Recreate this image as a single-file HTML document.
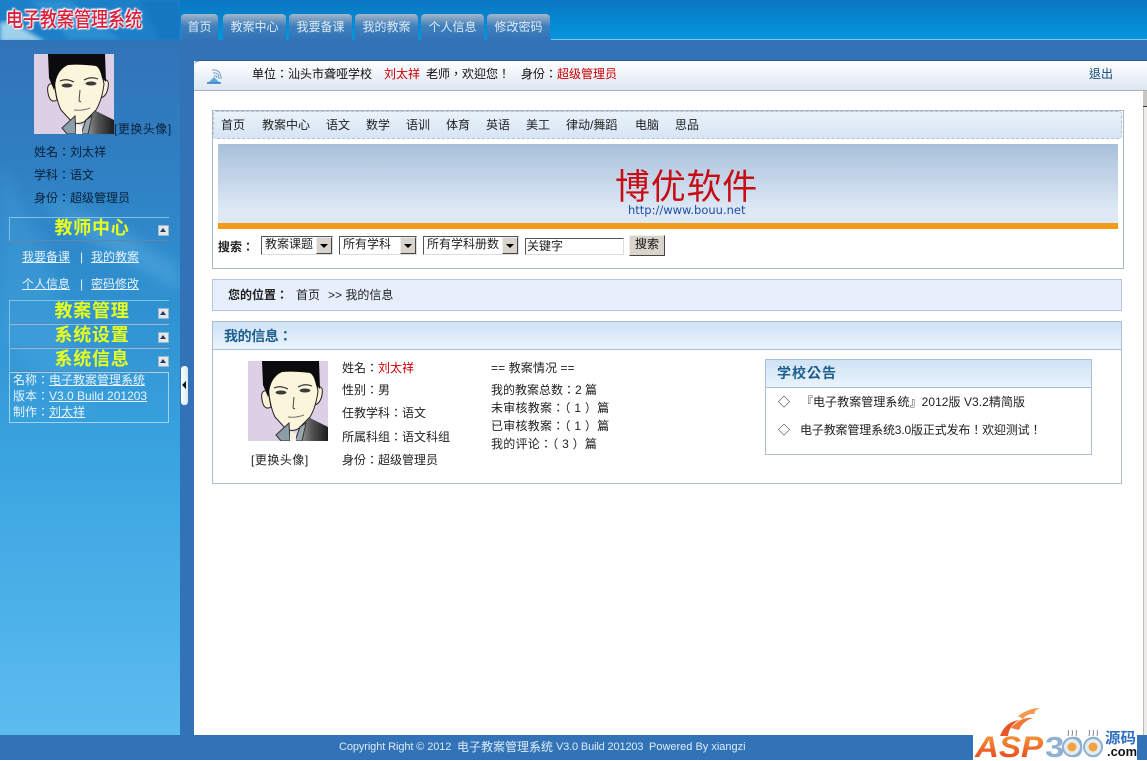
<!DOCTYPE html>
<html lang="zh-TW">
<head>
<meta charset="utf-8">
<title>电子教案管理系统</title>
<style>
html,body{margin:0;padding:0;width:1147px;height:761px;overflow:hidden;background:#fff}
body{position:relative;font:12px/14px "Liberation Sans","Noto Sans CJK TC",sans-serif;color:#222}
.a,.t{position:absolute}
.t{white-space:nowrap;line-height:14px}
.tab{position:absolute;top:14px;height:26px;border-radius:4px 4px 0 0;background:linear-gradient(#a3b8cc 0,#7a9ec4 5px,#3f80bd 12px,#3273b8 100%);color:#dfeaf4;text-align:center;line-height:26px}
.sh{position:absolute;left:9px;height:22px;border-top:1px solid #7fc4e8;border-left:1px solid #7fc4e8;border-bottom:1px solid #5f86ad;box-sizing:content-box;width:159px}
.sh b{position:absolute;left:38px;top:-2px;width:88px;text-align:center;font-size:18px;line-height:23px;color:#e6ff1e;letter-spacing:.75px;white-space:nowrap;font-family:"Noto Sans CJK TC",sans-serif}
.sh i{position:absolute;left:148px;top:7px;background:#dfe8ee;border:1px solid #9fb8c8;box-sizing:content-box;width:9px;height:9px}
.sh i:after{content:"";position:absolute;left:1px;top:2px;border:3.5px solid transparent;border-top:0;border-bottom:4px solid #335}
.lk{color:#e6f3fc;text-decoration:underline}
.sel{position:absolute;top:236px;height:19px;box-sizing:border-box;border:1px solid;border-color:#555 #ddd #ddd #555;background:#fff;font-size:12px;line-height:14px;padding-left:3px;white-space:nowrap;overflow:hidden}
.sel u{position:absolute;right:0;top:0;width:16px;height:17px;background:#d8d4cc;border:1px solid;border-color:#eee #444 #444 #eee;box-sizing:border-box;text-decoration:none}
.sel u:after{content:"";position:absolute;left:3px;top:6px;border:4px solid transparent;border-top:4px solid #000;border-bottom:0}
.grn{color:#c00}
</style>
</head>
<body>

<!-- top band -->
<div class="a" style="left:0;top:0;width:1147px;height:40px;background:linear-gradient(#0a76c2,#0497de)"></div>
<svg class="a" style="left:0;top:0" width="180" height="40">
  <defs><filter id="bl"><feGaussianBlur stdDeviation="2"/></filter></defs>
  <rect width="180" height="40" fill="#1c80c8"/>
  <polygon points="0,22 12,22 46,42 0,42" fill="#c8ecf8" opacity=".75" filter="url(#bl)"/>
  <polygon points="30,0 70,0 120,40 70,40" fill="#3fa4dc" opacity=".4" filter="url(#bl)"/>
  <polygon points="140,0 180,0 180,40 160,40" fill="#0d6fba" opacity=".5" filter="url(#bl)"/>
</svg>
<div class="t" style="left:6px;top:6px;width:138px;font-size:17px;line-height:24px;font-weight:500;color:#d8203c;font-family:'Noto Sans CJK TC',sans-serif;transform:scaleY(1.2);transform-origin:50% 50%;text-shadow:0 0 2px #fff,0 0 2px #fff,0 0 3px #fcd,1px 1px 1px #fff,-1px -1px 1px #fff">电子教案管理系统</div>

<div class="a" style="left:0;top:40px;width:1147px;height:21px;background:#3273b8"></div>
<div class="a" style="left:551px;top:39px;width:596px;height:1px;background:#7cc8f0"></div>

<div class="tab" style="left:181px;width:37px">首页</div>
<div class="tab" style="left:223px;width:63px">教案中心</div>
<div class="tab" style="left:289px;width:63px">我要备课</div>
<div class="tab" style="left:355px;width:63px">我的教案</div>
<div class="tab" style="left:421px;width:63px">个人信息</div>
<div class="tab" style="left:487px;width:63px">修改密码</div>

<!-- sidebar -->
<div class="a" style="left:0;top:40px;width:180px;height:695px;background:linear-gradient(#3273b8 0,#2f7fc2 120px,#2f90d0 260px,#3aa4e0 420px,#5cbcf0 695px)"></div>
<svg class="a" style="left:0;top:40px" width="180" height="695">
  <defs><filter id="bl2"><feGaussianBlur stdDeviation="8"/></filter></defs>
  <polygon points="30,150 120,190 180,230 180,250 90,200" fill="#7accf0" opacity=".3" filter="url(#bl2)"/>
  <polygon points="0,120 50,220 90,380 0,300" fill="#5fb8e8" opacity=".2" filter="url(#bl2)"/>
</svg>
<div class="a" style="left:180px;top:40px;width:14px;height:695px;background:#3273b8"></div>

<svg class="a" style="left:34px;top:54px" width="80" height="80" viewBox="0 0 80 80">
  <defs><linearGradient id="sd" x1="0" y1="0" x2="1" y2="0"><stop offset="0" stop-color="#aaa"/><stop offset=".45" stop-color="#555"/><stop offset="1" stop-color="#1c1c1c"/></linearGradient></defs>
  <rect width="80" height="80" fill="#dccfe6"/>
  <path d="M50 80 L58 55 L80 66 L80 80Z" fill="url(#sd)"/>
  <path d="M23 46 Q16 50 14 39 Q12 28 20 30Z" fill="#f9f2d8" stroke="#222"/>
  <path d="M68 26 Q76 24 74 34 Q72 44 65 44Z" fill="#f9f2d8" stroke="#222"/>
  <path d="M20 20 L34 9 L66 11 L70 30 Q68 46 62 56 L50 68 Q44 71 38 68 L27 56 Q21 44 20 20Z" fill="#fbf5dc" stroke="#222"/>
  <path d="M14 0 L71 0 L72 28 L68 24 Q66 14 62 12 Q46 10 34 11 Q25 15 22 26 L20 36 L15 24 Z" fill="#0b0b0d"/>
  <path d="M26 27 Q32 24 40 28" fill="none" stroke="#333" stroke-width="1.2"/>
  <path d="M50 26 Q57 22 64 25" fill="none" stroke="#333" stroke-width="1.2"/>
  <ellipse cx="33" cy="31.5" rx="5.5" ry="2" fill="#3a3a3a"/>
  <ellipse cx="57" cy="29.5" rx="5.5" ry="2" fill="#3a3a3a"/>
  <path d="M46 36 L45 47 L47 48" fill="none" stroke="#444"/>
  <path d="M40 56 Q48 57 56 54" fill="none" stroke="#777"/>
  <path d="M28 74 L41 62 L42 80 L33 80 Z" fill="#8e9ea8" stroke="#333"/>
  <path d="M54 80 L58 62 L52 66 L47 80Z" fill="#9aa8b0" stroke="#333"/>
  <path d="M42 80 L42 70 L48 72 L48 80Z" fill="#f4f2e4"/>
</svg>
<div class="t" style="left:114px;top:122px;color:#0a2038;letter-spacing:.5px">[更换头像]</div>
<div class="t" style="left:34px;top:145px;color:#0a2038">姓名：刘太祥</div>
<div class="t" style="left:34px;top:168px;color:#0a2038">学科：语文</div>
<div class="t" style="left:34px;top:191px;color:#0a2038">身份：超级管理员</div>

<div class="sh" style="top:217px"><b>教师中心</b><i></i></div>
<div class="t lk" style="left:22px;top:250px">我要备课</div>
<div class="t" style="left:80px;top:250px;color:#e6f3fc">|</div>
<div class="t lk" style="left:91px;top:250px">我的教案</div>
<div class="t lk" style="left:22px;top:277px">个人信息</div>
<div class="t" style="left:80px;top:277px;color:#e6f3fc">|</div>
<div class="t lk" style="left:91px;top:277px">密码修改</div>
<div class="sh" style="top:300px"><b>教案管理</b><i></i></div>
<div class="sh" style="top:324px"><b>系统设置</b><i></i></div>
<div class="sh" style="top:348px"><b>系统信息</b><i></i></div>
<div class="a" style="left:9px;top:372px;width:158px;height:49px;border:1px solid #9ed4f0"></div>
<div class="t" style="left:13px;top:373px;color:#eaf6fd">名称：<span class="lk">电子教案管理系统</span></div>
<div class="t" style="left:13px;top:389px;color:#eaf6fd">版本：<span class="lk">V3.0 Build 201203</span></div>
<div class="t" style="left:13px;top:405px;color:#eaf6fd">制作：<span class="lk">刘太祥</span></div>

<!-- collapse handle -->
<div class="a" style="left:181px;top:366px;width:7px;height:39px;border-radius:3px;background:linear-gradient(90deg,#fff,#dbe8f4)"></div>
<div class="a" style="left:182px;top:381px;border:4px solid transparent;border-left:0;border-right:4px solid #112"></div>

<!-- main -->
<div class="a" style="left:194px;top:61px;width:953px;height:674px;background:#fff;border-radius:6px 0 0 0"></div>
<div class="a" style="left:194px;top:60px;width:953px;height:31px;box-sizing:border-box;border-radius:6px 0 0 0;border-top:1px solid #2a5a88;border-bottom:1px solid #aab2ba;background:linear-gradient(#fff,#dde6f1)"></div>
<svg class="a" style="left:207px;top:68px" width="15" height="16" viewBox="0 0 15 16">
  <path d="M1 15 L7 9 L13 15Z" fill="#5da8e0"/>
  <path d="M0 15H14" stroke="#2f7fc2" stroke-width="1.5"/>
  <path d="M7 8 Q10 7 10 10 M6 5 Q12 4 12 11 M5 2 Q14 1 14 11" fill="none" stroke="#6f9cc4"/>
</svg>
<div class="t" style="left:252px;top:67px;color:#111">单位：汕头市聋哑学校</div>
<div class="t grn" style="left:384px;top:67px">刘太祥</div>
<div class="t" style="left:426px;top:67px;color:#111">老师，欢迎您！</div>
<div class="t" style="left:521px;top:67px;color:#111">身份：<span class="grn">超级管理员</span></div>
<div class="t" style="left:1089px;top:67px;color:#104878">退出</div>

<!-- scrollbar -->
<div class="a" style="left:1143px;top:107px;width:4px;height:628px;background:#eeece8;border-left:1px solid #bdbbb5;box-sizing:border-box"></div>
<div class="a" style="left:1143px;top:91px;width:4px;height:16px;background:#c8c6c0;border-bottom:1px solid #333;box-sizing:border-box"></div>

<!-- box 1 -->
<div class="a" style="left:212px;top:110px;width:912px;height:159px;box-sizing:border-box;border:1px solid #a9b8c8"></div>
<div class="a" style="left:213px;top:111px;width:909px;height:28px;box-sizing:border-box;border:1px dashed #b4c0cc;border-radius:3px;background:linear-gradient(#eaf2fa,#d6e5f5)"></div>
<div class="t" style="left:221px;top:118px">首页</div>
<div class="t" style="left:262px;top:118px">教案中心</div>
<div class="t" style="left:326px;top:118px">语文</div>
<div class="t" style="left:366px;top:118px">数学</div>
<div class="t" style="left:406px;top:118px">语训</div>
<div class="t" style="left:446px;top:118px">体育</div>
<div class="t" style="left:486px;top:118px">英语</div>
<div class="t" style="left:526px;top:118px">美工</div>
<div class="t" style="left:566px;top:118px">律动/舞蹈</div>
<div class="t" style="left:635px;top:118px">电脑</div>
<div class="t" style="left:675px;top:118px">思品</div>

<div class="a" style="left:218px;top:144px;width:900px;height:79px;background:linear-gradient(#a9c0da,#dfe9f6 85%)"></div>
<div class="a" style="left:218px;top:223px;width:900px;height:6px;background:#f39c1a"></div>
<div class="t" style="left:615px;top:163px;font-size:35px;line-height:44px;color:#c80c14;font-family:'Noto Sans CJK SC',sans-serif;letter-spacing:.75px">博优软件</div>
<div class="t" style="left:628px;top:203px;font-family:'DejaVu Sans',sans-serif;font-size:11.5px;color:#1c4fa6">http://www.bouu.net</div>

<div class="t" style="left:218px;top:240px;font-weight:700;color:#222">搜索：</div>
<div class="sel" style="left:261px;width:72px">教案课题<u></u></div>
<div class="sel" style="left:339px;width:78px">所有学科<u></u></div>
<div class="sel" style="left:423px;width:96px">所有学科册数<u></u></div>
<div class="a" style="left:525px;top:238px;width:99px;height:17px;box-sizing:border-box;border:1px solid;border-color:#555 #ddd #ddd #555;background:#fff;line-height:14px;padding-left:1px;color:#222">关键字</div>
<div class="a" style="left:629px;top:235px;width:36px;height:21px;box-sizing:border-box;border:1px solid;border-color:#eee #444 #444 #eee;background:#d8d4cc;text-align:center;line-height:17px;color:#111">搜索</div>

<!-- breadcrumb -->
<div class="a" style="left:212px;top:279px;width:910px;height:32px;box-sizing:border-box;border:1px solid #b4c6dc;background:#e8effc"></div>
<div class="t" style="left:228px;top:288px;font-weight:700;color:#222">您的位置：</div>
<div class="t" style="left:296px;top:288px">首页</div>
<div class="t" style="left:328px;top:288px">&gt;&gt; 我的信息</div>

<!-- info panel -->
<div class="a" style="left:212px;top:321px;width:910px;height:163px;box-sizing:border-box;border:1px solid #a8bfd6"></div>
<div class="a" style="left:213px;top:322px;width:908px;height:28px;box-sizing:border-box;border-bottom:1px solid #a8bfd6;background:linear-gradient(#cfe3f5,#e9f3fb)"></div>
<div class="t" style="left:224px;top:329px;font-size:14px;font-weight:700;color:#1f5f90;letter-spacing:-.4px">我的信息：</div>

<svg class="a" style="left:248px;top:361px" width="80" height="80" viewBox="0 0 80 80">
  <rect width="80" height="80" fill="#dccfe6"/>
  <path d="M50 80 L58 55 L80 66 L80 80Z" fill="url(#sd)"/>
  <path d="M23 46 Q16 50 14 39 Q12 28 20 30Z" fill="#f9f2d8" stroke="#222"/>
  <path d="M68 26 Q76 24 74 34 Q72 44 65 44Z" fill="#f9f2d8" stroke="#222"/>
  <path d="M20 20 L34 9 L66 11 L70 30 Q68 46 62 56 L50 68 Q44 71 38 68 L27 56 Q21 44 20 20Z" fill="#fbf5dc" stroke="#222"/>
  <path d="M14 0 L71 0 L72 28 L68 24 Q66 14 62 12 Q46 10 34 11 Q25 15 22 26 L20 36 L15 24 Z" fill="#0b0b0d"/>
  <path d="M26 27 Q32 24 40 28" fill="none" stroke="#333" stroke-width="1.2"/>
  <path d="M50 26 Q57 22 64 25" fill="none" stroke="#333" stroke-width="1.2"/>
  <ellipse cx="33" cy="31.5" rx="5.5" ry="2" fill="#3a3a3a"/>
  <ellipse cx="57" cy="29.5" rx="5.5" ry="2" fill="#3a3a3a"/>
  <path d="M46 36 L45 47 L47 48" fill="none" stroke="#444"/>
  <path d="M40 56 Q48 57 56 54" fill="none" stroke="#777"/>
  <path d="M28 74 L41 62 L42 80 L33 80 Z" fill="#8e9ea8" stroke="#333"/>
  <path d="M54 80 L58 62 L52 66 L47 80Z" fill="#9aa8b0" stroke="#333"/>
  <path d="M42 80 L42 70 L48 72 L48 80Z" fill="#f4f2e4"/>
</svg>
<div class="t" style="left:251px;top:453px;letter-spacing:.5px">[更换头像]</div>
<div class="t" style="left:342px;top:361px">姓名：<span class="grn">刘太祥</span></div>
<div class="t" style="left:342px;top:383px">性别：男</div>
<div class="t" style="left:342px;top:406px">任教学科：语文</div>
<div class="t" style="left:342px;top:430px">所属科组：语文科组</div>
<div class="t" style="left:342px;top:453px">身份：超级管理员</div>
<div class="t" style="left:491px;top:361px;letter-spacing:.1px">== 教案情况 ==</div>
<div class="t" style="left:491px;top:383px">我的教案总数：2 篇</div>
<div class="t" style="left:491px;top:401px;letter-spacing:.25px">未审核教案：（ 1 ）篇</div>
<div class="t" style="left:491px;top:419px;letter-spacing:.25px">已审核教案：（ 1 ）篇</div>
<div class="t" style="left:491px;top:437px;letter-spacing:.25px">我的评论：（ 3 ）篇</div>

<!-- notice -->
<div class="a" style="left:765px;top:359px;width:327px;height:96px;box-sizing:border-box;border:1px solid #a8bfd6"></div>
<div class="a" style="left:766px;top:360px;width:325px;height:28px;box-sizing:border-box;border-bottom:1px solid #a8bfd6;background:linear-gradient(#cfe3f5,#e9f3fb)"></div>
<div class="t" style="left:777px;top:366px;font-size:14px;font-weight:700;color:#1f5f90;letter-spacing:1px">学校公告</div>
<div class="t" style="left:778px;top:395px">◇</div>
<div class="t" style="left:801px;top:395px;letter-spacing:.06px">『电子教案管理系统』2012版 V3.2精简版</div>
<div class="t" style="left:778px;top:423px">◇</div>
<div class="t" style="left:800px;top:423px;letter-spacing:-.15px">电子教案管理系统3.0版正式发布！欢迎测试！</div>

<!-- footer -->
<div class="a" style="left:0;top:735px;width:1147px;height:25px;background:#3273b8"></div>
<div class="t" style="left:339px;top:740px;font-size:11px;color:#dcebf8;letter-spacing:-.1px">Copyright Right © 2012</div>
<div class="t" style="left:457px;top:740px;color:#dcebf8">电子教案管理系统</div>
<div class="t" style="left:556px;top:740px;font-size:11px;color:#dcebf8;letter-spacing:-.15px">V3.0 Build 201203</div>
<div class="t" style="left:649px;top:740px;font-size:11px;color:#dcebf8">Powered By xiangzi</div>

<!-- ASP300 logo -->
<svg class="a" style="left:973px;top:706px" width="174" height="55" viewBox="0 0 174 55">
  <defs>
    <linearGradient id="og" x1="0" y1="0" x2="0" y2="1"><stop offset="0" stop-color="#f6a23a"/><stop offset="1" stop-color="#e8391c"/></linearGradient>
  </defs>
  <rect x="0" y="29" width="164" height="25" fill="#fff"/>
  <path d="M27 30 Q32 16 46 14 Q36 20 35 30Z" fill="#e8562a"/>
  <path d="M38 22 Q48 10 60 12 Q50 15 46 24Z" fill="#ee7a3a"/>
  <path d="M45 10 Q56 2 67 2 Q60 5 62 8 Q54 7 50 13Z" fill="#f29a50"/>
  <text x="2" y="51" font-family="Liberation Sans,sans-serif" font-size="30" font-weight="700" font-style="italic" fill="url(#og)" textLength="68" lengthAdjust="spacingAndGlyphs">ASP</text>
  <text x="72" y="51" font-family="Liberation Sans,sans-serif" font-size="29" font-weight="700" fill="#8fb0cf" textLength="58" lengthAdjust="spacingAndGlyphs">300</text>
  <circle cx="99" cy="41" r="9" fill="#e4ecf2" stroke="#8fb0cf" stroke-width="2"/>
  <circle cx="120" cy="41" r="9" fill="#e4ecf2" stroke="#8fb0cf" stroke-width="2"/>
  <circle cx="99" cy="41" r="4.5" fill="#f2a23c"/>
  <circle cx="120" cy="41" r="4.5" fill="#f2a23c"/>
  <path d="M95 30 q1-4 0-6 M99 30 q1-4 0-6 M103 30 q1-4 0-6 M116 30 q1-4 0-6 M120 30 q1-4 0-6 M124 30 q1-4 0-6" fill="none" stroke="#889" stroke-width="1"/>
  <text x="132" y="37" font-family="Noto Sans CJK SC,sans-serif" font-size="15" font-weight="700" fill="#2f6fc0" textLength="31" lengthAdjust="spacingAndGlyphs">源码</text>
  <text x="134" y="50" font-family="Liberation Sans,sans-serif" font-size="13" font-weight="700" fill="#111" textLength="30" lengthAdjust="spacingAndGlyphs">.com</text>
</svg>
</body>
</html>
